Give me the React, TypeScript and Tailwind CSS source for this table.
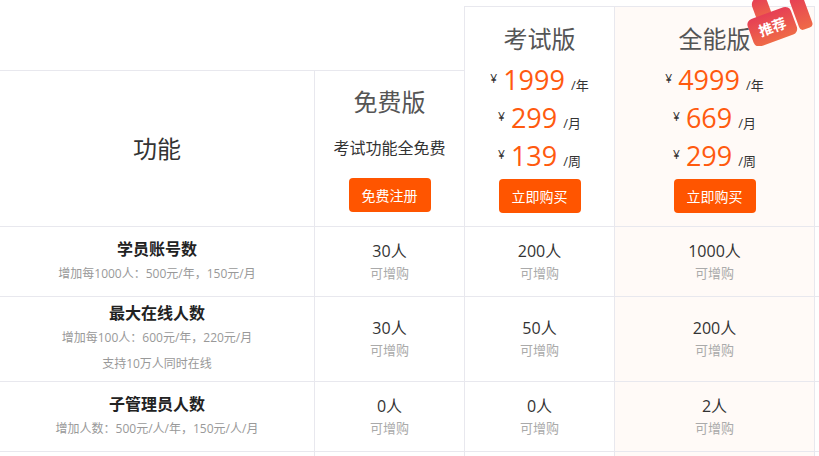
import React from "react";

interface Feature {
  title: string;
  notes: string[];
  values: string[];
}

const features: Feature[] = [
  {
    title: "学员账号数",
    notes: ["增加每1000人：500元/年，150元/月"],
    values: ["30人", "200人", "1000人"],
  },
  {
    title: "最大在线人数",
    notes: ["增加每100人：600元/年，220元/月", "支持10万人同时在线"],
    values: ["30人", "50人", "200人"],
  },
  {
    title: "子管理员人数",
    notes: ["增加人数：500元/人/年，150元/人/月"],
    values: ["0人", "0人", "2人"],
  },
];

const examPrices = [
  { amount: "1999", unit: "/年" },
  { amount: "299", unit: "/月" },
  { amount: "139", unit: "/周" },
];

const fullPrices = [
  { amount: "4999", unit: "/年" },
  { amount: "669", unit: "/月" },
  { amount: "299", unit: "/周" },
];

const PriceLine: React.FC<{ amount: string; unit: string }> = ({ amount, unit }) => (
  <div className="flex items-baseline justify-center h-[38px] leading-[38px]">
    <span className="relative -top-[7px] text-[12px] text-[#333]">¥</span>
    <span className="ml-[6px] text-[27px] text-[#ff5a0f]">{amount}</span>
    <span className="ml-[6px] text-[13px] text-[#333]">{unit}</span>
  </div>
);

const BuyButton: React.FC<{ label: string }> = ({ label }) => (
  <button className="w-[82px] h-[34px] rounded-[4px] bg-[#ff5500] text-white text-[14px]">
    {label}
  </button>
);

// thumbs-up "推荐" badge on the top plan
const Badge: React.FC = () => (
  <svg
    className="absolute left-[740px] top-0"
    width="76"
    height="46"
    viewBox="0 0 76 46"
  >
    <defs>
      <linearGradient id="thumb" x1="0" y1="0" x2="0" y2="1">
        <stop offset="0" stopColor="#e63f55" />
        <stop offset="1" stopColor="#ef6a47" />
      </linearGradient>
    </defs>
    <g transform="rotate(-20 38 22)">
      <rect x="19" y="-8" width="16" height="24" rx="7" fill="url(#thumb)" />
      <rect x="8" y="10" width="46" height="29" rx="6" fill="url(#thumb)" />
      <rect x="56" y="4" width="14" height="34" rx="4" fill="url(#thumb)" />
      <text
        x="31"
        y="30"
        textAnchor="middle"
        fontSize="14"
        fontWeight="bold"
        fill="#fff"
        fontFamily="'Noto Sans CJK SC', sans-serif"
      >
        推荐
      </text>
    </g>
  </svg>
);

export default function App() {
  return (
    <div className="relative w-[819px] h-[456px] overflow-hidden bg-white font-['Open_Sans','Noto_Sans_CJK_SC',sans-serif] text-[#333]">
      <div className="pt-[6px] w-[1020px]">
        {/* Header */}
        <div className="flex border-b border-[#e8e8ee]">
          <div className="w-[464px] mt-[64px] h-[156px] flex border-t border-[#e8e8ee]">
            <div className="w-[315px] border-r border-[#e8e8ee] flex items-center justify-center">
              <span className="text-[24px] text-[#333]">功能</span>
            </div>
            <div className="w-[149px] flex flex-col items-center pt-[15px]">
              <div className="text-[24px] leading-8 text-[#555]">免费版</div>
              <div className="mt-[18px] text-[16px] leading-6 text-[#333]">考试功能全免费</div>
              <div className="mt-[18px]">
                <BuyButton label="免费注册" />
              </div>
            </div>
          </div>
          <div className="w-[151px] h-[220px] border-t border-l border-r border-[#e8e8ee] flex flex-col items-center pt-[16px]">
            <div className="text-[24px] leading-8 text-[#555]">考试版</div>
            <div className="mt-[6px] w-full">
              {examPrices.map((p) => (
                <PriceLine key={p.unit} amount={p.amount} unit={p.unit} />
              ))}
            </div>
            <div className="mt-[4px]">
              <BuyButton label="立即购买" />
            </div>
          </div>
          <div className="w-[200px] h-[220px] border-t border-r border-[#e8e8ee] bg-[#fffaf7] flex flex-col items-center pt-[16px]">
            <div className="text-[24px] leading-8 text-[#555]">全能版</div>
            <div className="mt-[6px] w-full">
              {fullPrices.map((p) => (
                <PriceLine key={p.unit} amount={p.amount} unit={p.unit} />
              ))}
            </div>
            <div className="mt-[4px]">
              <BuyButton label="立即购买" />
            </div>
          </div>
          <div className="flex-1" />
        </div>

        {/* Feature rows */}
        {features.map((f) => (
          <div key={f.title} className="flex border-b border-[#e8e8ee]">
            <div
              className={`w-[315px] border-r border-[#e8e8ee] flex flex-col items-center justify-center ${
                f.notes.length > 1 ? "h-[84px]" : "h-[69px]"
              }`}
            >
              <div className="text-[16px] leading-6 font-bold text-[#222]">{f.title}</div>
              {f.notes.map((n) => (
                <div key={n} className="text-[12px] leading-[26px] text-[#999]">
                  {n}
                </div>
              ))}
            </div>
            {f.values.map((v, i) => (
              <div
                key={i}
                className={`border-r border-[#e8e8ee] flex flex-col items-center justify-center ${
                  i === 2 ? "w-[200px] bg-[#fffaf7]" : "w-[150px]"
                }`}
              >
                <div className="text-[16px] leading-[22px] text-[#333]">{v}</div>
                <div className="text-[13px] leading-[22px] text-[#aaa]">可增购</div>
              </div>
            ))}
            <div className="flex-1" />
          </div>
        ))}

        {/* next row, below the fold */}
        <div className="flex h-[40px]">
          <div className="w-[315px] border-r border-[#e8e8ee]" />
          <div className="w-[150px] border-r border-[#e8e8ee]" />
          <div className="w-[150px] border-r border-[#e8e8ee]" />
          <div className="w-[200px] border-r border-[#e8e8ee] bg-[#fffaf7]" />
          <div className="flex-1" />
        </div>
      </div>
      <Badge />
    </div>
  );
}
